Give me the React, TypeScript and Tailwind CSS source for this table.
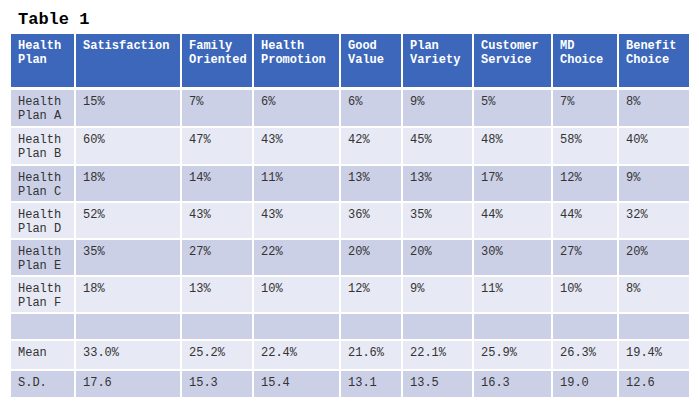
const cols = [
  "Health\nPlan",
  "Satisfaction",
  "Family\nOriented",
  "Health\nPromotion",
  "Good\nValue",
  "Plan\nVariety",
  "Customer\nService",
  "MD\nChoice",
  "Benefit\nChoice",
];

const rows: { cells: string[]; h: string }[] = [
  { cells: ["Health\nPlan A", "15%", "7%", "6%", "6%", "9%", "5%", "7%", "8%"], h: "h-[36px]" },
  { cells: ["Health\nPlan B", "60%", "47%", "43%", "42%", "45%", "48%", "58%", "40%"], h: "h-[36px]" },
  { cells: ["Health\nPlan C", "18%", "14%", "11%", "13%", "13%", "17%", "12%", "9%"], h: "h-[35px]" },
  { cells: ["Health\nPlan D", "52%", "43%", "43%", "36%", "35%", "44%", "44%", "32%"], h: "h-[35px]" },
  { cells: ["Health\nPlan E", "35%", "27%", "22%", "20%", "20%", "30%", "27%", "20%"], h: "h-[35px]" },
  { cells: ["Health\nPlan F", "18%", "13%", "10%", "12%", "9%", "11%", "10%", "8%"], h: "h-[35px]" },
  { cells: ["", "", "", "", "", "", "", "", ""], h: "h-[25px]" },
  { cells: ["Mean", "33.0%", "25.2%", "22.4%", "21.6%", "22.1%", "25.9%", "26.3%", "19.4%"], h: "h-[28px]" },
  { cells: ["S.D.", "17.6", "15.3", "15.4", "13.1", "13.5", "16.3", "19.0", "12.6"], h: "h-[26px]" },
];

const grid = "grid grid-cols-[63px_104px_70px_85px_60px_69px_77px_64px_70px] gap-x-[2px]";

export default function App() {
  return (
    <div className="w-[699px] h-[408px] bg-white font-['Courier_New','Nimbus_Mono_PS','FreeMono','Liberation_Mono',monospace] overflow-hidden">
      <div className="h-[34px] pl-[18px] pt-[10px] text-[17px] leading-[20px] font-bold text-black">Table 1</div>
      <div className="ml-[11px] w-[678px]">
        <div className={`${grid} h-[53px]`}>
          {cols.map((c, i) => (
            <div key={i} className="bg-[#3c67ba] text-white font-bold text-[12px] leading-[14px] px-[7px] pt-[5px] whitespace-pre">
              {c}
            </div>
          ))}
        </div>
        <div className="mt-[3px] flex flex-col gap-y-[2px]">
          {rows.map((r, ri) => (
            <div key={ri} className={`${grid} ${r.h}`}>
              {r.cells.map((c, ci) => (
                <div
                  key={ci}
                  className={`${ri % 2 === 0 ? "bg-[#cbd0e7]" : "bg-[#e7e9f4]"} text-[#333333] text-[12px] leading-[14px] px-[7px] pt-[5px] whitespace-pre`}
                >
                  {c}
                </div>
              ))}
            </div>
          ))}
        </div>
      </div>
    </div>
  );
}
